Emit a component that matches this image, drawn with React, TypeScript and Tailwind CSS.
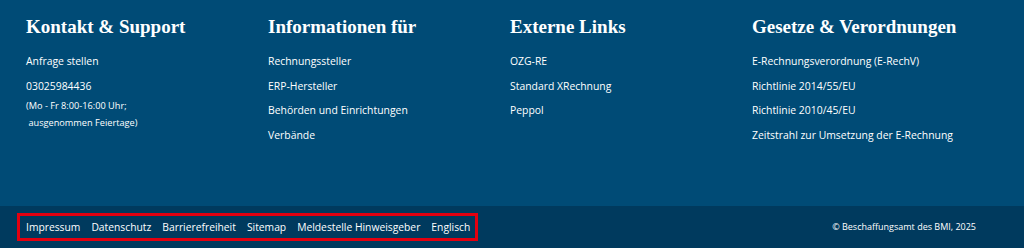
import React from 'react';

const columns: { title: string; items: string[] }[] = [
  { title: 'Informationen für', items: ['Rechnungssteller', 'ERP-Hersteller', 'Behörden und Einrichtungen', 'Verbände'] },
  { title: 'Externe Links', items: ['OZG-RE', 'Standard XRechnung', 'Peppol'] },
  {
    title: 'Gesetze & Verordnungen',
    items: [
      'E-Rechnungsverordnung (E-RechV)',
      'Richtlinie 2014/55/EU',
      'Richtlinie 2010/45/EU',
      'Zeitstrahl zur Umsetzung der E-Rechnung',
    ],
  },
];

const bottomLinks = ['Impressum', 'Datenschutz', 'Barrierefreiheit', 'Sitemap', 'Meldestelle Hinweisgeber', 'Englisch'];

const headingFont = "font-['Liberation_Serif','DejaVu_Serif',serif]";
const bodyFont = "font-['Open_Sans','Liberation_Sans',sans-serif]";

export default function App() {
  return (
    <footer className={`w-[1024px] h-[248px] flex flex-col text-white ${bodyFont}`}>
      <div className="h-[206px] bg-[#004b76] px-[26px] pt-[14px] grid grid-cols-[repeat(4,242px)]">
        <div className="flex flex-col">
          <h3 className={`${headingFont} font-bold text-[19px] leading-[26px] mb-[14px]`}>Kontakt &amp; Support</h3>
          <a className="text-[10.4px] leading-[14px] mb-[10.7px]">Anfrage stellen</a>
          <a className="text-[10.4px] leading-[14px] mb-[4px]">03025984436</a>
          <p className="text-[9.2px] leading-[17px]">
            (Mo - Fr 8:00-16:00 Uhr;
            <br />
            &nbsp;ausgenommen Feiertage)
          </p>
        </div>
        {columns.map((col) => (
          <div key={col.title} className="flex flex-col">
            <h3 className={`${headingFont} font-bold text-[19px] leading-[26px] mb-[14px]`}>{col.title}</h3>
            <ul className="flex flex-col gap-[10.7px]">
              {col.items.map((item) => (
                <li key={item} className="text-[10.4px] leading-[14px]">
                  {item}
                </li>
              ))}
            </ul>
          </div>
        ))}
      </div>
      <div className="flex-1 bg-[#003a5e] flex items-center justify-between pl-[17px] pr-[48px]">
        <nav className="border-[3px] border-[#e3000f] h-[28px] flex items-center gap-[11px] pl-[6px] pr-[5px]">
          {bottomLinks.map((l) => (
            <a key={l} className="text-[10.3px] leading-[14px]">
              {l}
            </a>
          ))}
        </nav>
        <span className="text-[9px] leading-[14px]">© Beschaffungsamt des BMI, 2025</span>
      </div>
    </footer>
  );
}
